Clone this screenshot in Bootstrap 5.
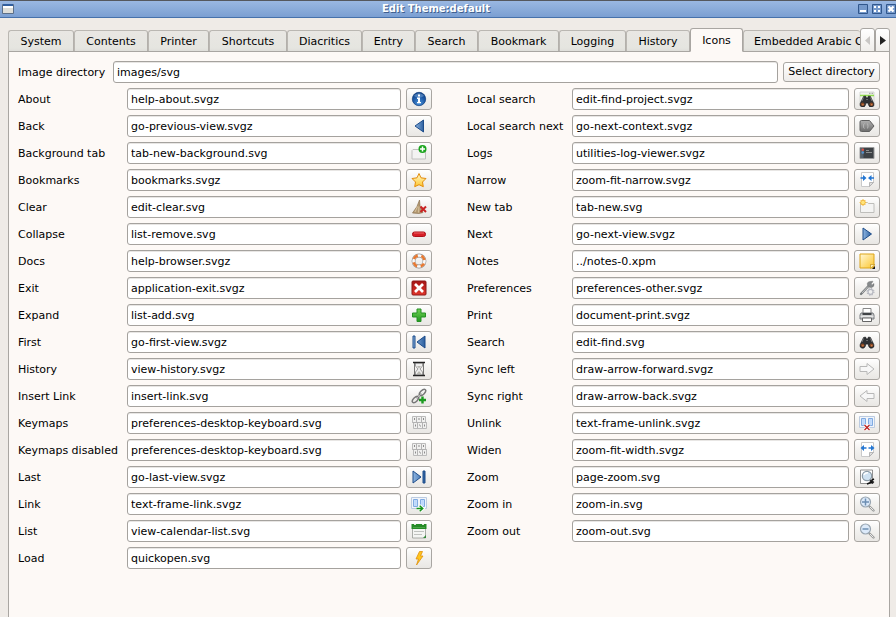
<!DOCTYPE html>
<html lang="en">
<head>
<meta charset="utf-8">
<meta name="viewport" content="width=device-width, initial-scale=1">
<title>Edit Theme:default</title>
<link href="https://cdn.jsdelivr.net/npm/bootstrap@5.3.0/dist/css/bootstrap.min.css" rel="stylesheet">
<style>
body{font:11px/16px "DejaVu Sans",sans-serif;color:#000;background:#efebe7}
.window{height:100vh}
.titlebar{height:18px;background:linear-gradient(#9ab8e2,#7b9fd2);border-top:1px solid #55585e;border-bottom:1px solid #4671ab;padding-left:2px}
.titlebar h1{font-size:10px;line-height:16px;color:#fff;text-shadow:1px 1px 0 #3f5f8e}
.winbtn{width:10px;height:10px;padding:0;border:0;background:none;display:flex}
.tabbar{margin:10px 6px 0 8px;height:24px;position:relative;z-index:1;padding-right:30px}
.tabbar::after{content:"";position:absolute;left:0;right:0;bottom:0;border-bottom:1px solid #a9a6a2}
.tabstrip{display:grid;grid-template-columns:66fr 74fr 61fr 78fr 75fr 53fr 63fr 81fr 67fr 64fr 53fr 117fr;height:24px;align-items:end;flex:1;min-width:0;border:0;overflow:hidden}
.tabstrip .nav-link{width:100%;height:22px;padding:2px 0 0;margin:0;border:1px solid #bab7b2;border-right-color:#b3b0ab;border-bottom:1px solid #a9a6a2;border-radius:3px 3px 0 0;background:linear-gradient(#e9e7e3,#e5e5e0 85%,#dfdeda);color:#000;white-space:nowrap;overflow:hidden;text-align:center}
.tabstrip .nav-link:hover{border-color:#bab7b2}
.tabstrip .nav-link.active{height:24px;background:#fdf9f6;border-color:#a9a6a2;border-bottom-color:#fdf9f6;position:relative;z-index:3;color:#000}
.tabstrip .nav-link.clipped{text-align:left;padding-left:10px;border-right:0}
.scrollers{position:absolute;right:0;top:0;z-index:2}
.scrollers button{width:15px;height:24px;padding:0;border:1px solid #a9a6a2;border-radius:3px 3px 0 0;background:linear-gradient(#fff,#f0eeeb);display:flex;align-items:center;justify-content:center}
.pane{flex:1;margin:0 6px 0 8px;padding:9px 9px 20px;border:1px solid #a9a6a2;border-width:0 1px;background:#fdf9f6}
.pane label{padding-top:2px}
.dirline label{width:90px}
.field{height:22px;padding:0 3px;font-size:11px;line-height:20px;color:#000;border:1px solid #a5a29e;border-radius:3px;background:#fff;box-shadow:inset 0 1px 0 #e8e6e4;min-width:0;flex:1}
.field:focus{box-shadow:inset 0 1px 0 #86abd9;border-color:#5b86be}
.tool{width:26px;height:22px;padding:0;border:1px solid #a9a6a2;border-radius:3px;background:linear-gradient(#fff,#f3f2f0 45%,#e9e7e4);display:flex;align-items:center;justify-content:center;flex:none}
.choose{height:20px;padding:0 3px;border:1px solid #a9a6a2;border-radius:3px;background:linear-gradient(#fff,#eeecea);font-size:11px;line-height:18px;color:#000;white-space:nowrap;min-width:97px}
.gap5{gap:5px}
.columns{display:grid;grid-template-columns:414fr 413fr;column-gap:35px;margin-top:5px}
.line{display:flex;align-items:center}
.line label{width:109px;white-space:nowrap;flex:none}
.second .line label{width:105px}
.line .tool{margin-left:5px}
</style>
<script src="https://cdn.jsdelivr.net/npm/bootstrap@5.3.0/dist/js/bootstrap.bundle.min.js"></script>
</head>
<body>
<svg width="0" height="0" class="position-absolute" aria-hidden="true">
<defs>
<linearGradient id="blue" x1="0" x2="1" y1="0" y2="0"><stop stop-color="#8fb6e2"/><stop offset="1" stop-color="#2b5f9f"/></linearGradient>
<radialGradient id="ball" cx=".5" cy=".8" r=".8"><stop stop-color="#4b93d8"/><stop offset=".6" stop-color="#1c58a5"/><stop offset="1" stop-color="#0c3c80"/></radialGradient>
<linearGradient id="gold" x2="0" y2="1"><stop stop-color="#fffbd0"/><stop offset="1" stop-color="#ffc62b"/></linearGradient>
<linearGradient id="note" x2="1" y2="1"><stop stop-color="#fff8d8"/><stop offset="1" stop-color="#fcc62c"/></linearGradient>
<linearGradient id="green" x2="0" y2="1"><stop stop-color="#72d055"/><stop offset="1" stop-color="#219a20"/></linearGradient>
<linearGradient id="red" x2="0" y2="1"><stop stop-color="#a51515"/><stop offset="1" stop-color="#e2372c"/></linearGradient>
<linearGradient id="gray" x2="0" y2="1"><stop stop-color="#b0b0b0"/><stop offset="1" stop-color="#6c6c6c"/></linearGradient>
<symbol id="binoc" viewBox="0 0 16 16"><path d="M4.500 3.500 6.500 3l1 2h1l1-2 2 .5 3.300 7a2.500 2.500 0 0 1-5 2L9 10H7l-.8 2.500a2.500 2.500 0 0 1-5-2z" fill="#2e3134" stroke="#17191b" stroke-width=".6"/><path d="M4.500 4.500 3 8m8.500-3.500L13 8M7.300 6.500h1.500" stroke="#8b8d8f" stroke-width=".8"/><circle cx="3.600" cy="11.300" r="1.800" fill="#8a4a25"/><circle cx="12.400" cy="11.300" r="1.800" fill="#8a4a25"/><circle cx="3.900" cy="11.700" r=".8" fill="#d48450"/><circle cx="12.700" cy="11.700" r=".8" fill="#d48450"/></symbol>
<symbol id="keys" viewBox="0 0 16 16"><path d="M1.500 1.500h13v6h-13zM2.500 7.500h13v6h-13z" fill="#f0f0ef" stroke="#bbb"/><path d="M5.500 2v5M10.500 2v5M6.500 8v5M11.500 8v5M1.500 7.500h14" stroke="#b3b3b3"/><path d="M3.500 3v2M8 3v2M12.500 3v2M4.500 9.500v2M8.500 9.500l1 2M13.500 9.500v2" fill="none" stroke="#8c8c8c"/></symbol>
<symbol id="frames" viewBox="0 0 16 16"><path d="M.5 1.500h15v11H.5z" fill="#f2f5fa" stroke="#bccbe0"/><path d="M2.500 3.500h4v7h-4zM9.500 3.500h4v7h-4z" fill="#cfe3ff" stroke="#80abe2"/><path d="M3.500 5h2m-2 2h2m-2 2h2m5-4h2m-2 2h2m-2 2h2" stroke="#9cc1f0" stroke-width=".7"/></symbol>
<symbol id="glass" viewBox="0 0 16 16"><path d="m10.500 10.500 4 4" stroke="#999a99" stroke-width="2.400" stroke-linecap="round"/><path d="m11 11 3.400 3.400" stroke="#f4f4f4" stroke-width=".9"/><circle cx="6.500" cy="6" r="5" fill="#dceafa" stroke="#98a5b1" stroke-width="1.200"/></symbol>
<symbol id="fit" viewBox="0 0 16 16"><path d="M2.500.5h12v10l-4 4h-8z" fill="#fff" stroke="#cacaca"/><path d="M14.500 10.500h-4v4z" fill="#dedede" stroke="#aaa" stroke-width=".8"/></symbol>
</defs>
</svg>

<div class="window d-flex flex-column">
<header class="titlebar d-flex align-items-center justify-content-between">
  <svg width="12" height="12" viewBox="0 0 12 12" aria-hidden="true"><path d="M.5 1.500h11v9H.5z" fill="#deded9" stroke="#5c6f88"/><path d="M1 1h10v2H1z" fill="#315f9f"/><path d="M1 3h10v2H1z" fill="#fff"/></svg>
  <h1 class="m-0 fw-bold flex-fill text-center">Edit Theme:default</h1>
  <div class="d-flex gap-1">
    <button class="winbtn" type="button" aria-label="Minimize"><svg width="10" height="10"><path d="M.5.5h9v9h-9z" fill="#7599cb" stroke="#31578c"/><path d="M2 6h6v2H2z" fill="#fff"/></svg></button>
    <button class="winbtn" type="button" aria-label="Maximize"><svg width="10" height="10"><path d="M.5.5h9v9h-9z" fill="#7599cb" stroke="#31578c"/><path d="M2 2h2v2H2zM6 2h2v2H6zM2 6h2v2H2zM6 6h2v2H6z" fill="#fff"/></svg></button>
    <button class="winbtn" type="button" aria-label="Close"><svg width="10" height="10"><path d="M.5.5h9v9h-9z" fill="#7599cb" stroke="#31578c"/><path d="m2.500 2.500 5 5m0-5-5 5" stroke="#fff" stroke-width="2.200"/></svg></button>
  </div>
</header>

<div class="tabbar d-flex">
  <div class="nav nav-tabs tabstrip" role="tablist">
    <button class="nav-link" role="tab" type="button">System</button>
    <button class="nav-link" role="tab" type="button">Contents</button>
    <button class="nav-link" role="tab" type="button">Printer</button>
    <button class="nav-link" role="tab" type="button">Shortcuts</button>
    <button class="nav-link" role="tab" type="button">Diacritics</button>
    <button class="nav-link" role="tab" type="button">Entry</button>
    <button class="nav-link" role="tab" type="button">Search</button>
    <button class="nav-link" role="tab" type="button">Bookmark</button>
    <button class="nav-link" role="tab" type="button">Logging</button>
    <button class="nav-link" role="tab" type="button">History</button>
    <button class="nav-link active" role="tab" type="button" aria-selected="true">Icons</button>
    <button class="nav-link clipped" role="tab" type="button">Embedded Arabic C</button>
  </div>
  <div class="scrollers d-flex">
    <button type="button" aria-label="Scroll tabs left"><svg width="5" height="9"><path d="M5 0v9L0 4.500z" fill="#c9c7c5"/></svg></button>
    <button type="button" aria-label="Scroll tabs right"><svg width="6" height="9"><path d="M0 0v9l6-4.500z" fill="#222"/></svg></button>
  </div>
</div>

<main class="pane" role="tabpanel">
<div class="d-flex align-items-center gap5 dirline">
  <label for="dir">Image directory</label>
  <input class="form-control field" id="dir" value="images/svg">
  <button class="btn choose" type="button">Select directory</button>
</div>

<div class="columns">
<div class="d-flex flex-column gap5">
  <div class="line"><label for="a1">About</label><input class="form-control field" id="a1" value="help-about.svgz"><button class="btn tool" type="button" aria-label="About icon"><svg width="16" height="16" viewBox="0 0 16 16"><circle cx="8" cy="8" r="6.700" fill="url(#ball)" stroke="#0c3b7d" stroke-width=".7"/><path d="M3 5a6 6 0 0 1 10 0 9 9 0 0 1-10 0z" fill="#8db9e5" opacity=".45"/><path d="M7 3.500h2v2H7zM6 6.500h3v4.500h1v1.300H6V11h1V8H6z" fill="#fff"/></svg></button></div>
  <div class="line"><label for="a2">Back</label><input class="form-control field" id="a2" value="go-previous-view.svgz"><button class="btn tool" type="button" aria-label="Back icon"><svg width="16" height="16" viewBox="0 0 16 16"><path d="M12.500 2v12L4 8z" fill="url(#blue)" stroke="#1d4c8a"/></svg></button></div>
  <div class="line"><label for="a3">Background tab</label><input class="form-control field" id="a3" value="tab-new-background.svg"><button class="btn tool" type="button" aria-label="Background tab icon"><svg width="16" height="16" viewBox="0 0 16 16"><path d="M1 14V5.500l1-1h12.500V14z" fill="#f3f3f2" stroke="#c0c0be"/><circle cx="11.500" cy="4" r="4" fill="#1ba51d"/><path d="M11.500 1.500v5M9 4h5" stroke="#fff" stroke-width="1.500"/></svg></button></div>
  <div class="line"><label for="a4">Bookmarks</label><input class="form-control field" id="a4" value="bookmarks.svgz"><button class="btn tool" type="button" aria-label="Bookmarks icon"><svg width="16" height="16" viewBox="0 0 16 16"><path d="m8 1.500 2 4.300 5 .7-3.500 3.500.8 4.700L8 12.700l-4.300 2 .8-4.700L1 6.500l5-.7z" fill="url(#gold)" stroke="#e38d0c" stroke-linejoin="round"/></svg></button></div>
  <div class="line"><label for="a5">Clear</label><input class="form-control field" id="a5" value="edit-clear.svg"><button class="btn tool" type="button" aria-label="Clear icon"><svg width="16" height="16" viewBox="0 0 16 16"><path d="M8.500 1 9 7l3 6.500-4 1-6.500-.5L6 7.500z" fill="#b49a72" stroke="#8d7351" stroke-width=".7"/><path d="M6.500 7.500 4 13M8 7.500 7.500 13.500" stroke="#d7c39e"/><path d="m9.500 7.500 5.500 5.500m0-5.500L9.500 13" stroke="#c92323" stroke-width="2"/></svg></button></div>
  <div class="line"><label for="a6">Collapse</label><input class="form-control field" id="a6" value="list-remove.svg"><button class="btn tool" type="button" aria-label="Collapse icon"><svg width="16" height="16" viewBox="0 0 16 16"><rect x="1.500" y="6" width="13" height="4.500" rx="2" fill="#d71f27" stroke="#ad1119"/><path d="M3 7h10" stroke="#f17a7a" stroke-width=".8"/></svg></button></div>
  <div class="line"><label for="a7">Docs</label><input class="form-control field" id="a7" value="help-browser.svgz"><button class="btn tool" type="button" aria-label="Docs icon"><svg width="16" height="16" viewBox="0 0 16 16"><circle cx="8" cy="8" r="5.500" fill="none" stroke="#909090" stroke-width="3.800"/><circle cx="8" cy="8" r="5.500" fill="none" stroke="#fafafa" stroke-width="2.600"/><circle cx="8" cy="8" r="5.500" fill="none" stroke="#e77932" stroke-width="2.600" stroke-dasharray="5.240 3.400" stroke-dashoffset="2.620" transform="rotate(45 8 8)"/></svg></button></div>
  <div class="line"><label for="a8">Exit</label><input class="form-control field" id="a8" value="application-exit.svgz"><button class="btn tool" type="button" aria-label="Exit icon"><svg width="16" height="16" viewBox="0 0 16 16"><rect x="1" y="1" width="14" height="14" rx="1" fill="url(#red)" stroke="#8c1616"/><path d="m4 4 8 8m0-8-8 8" stroke="#fff" stroke-width="2.700"/></svg></button></div>
  <div class="line"><label for="a9">Expand</label><input class="form-control field" id="a9" value="list-add.svg"><button class="btn tool" type="button" aria-label="Expand icon"><svg width="16" height="16" viewBox="0 0 16 16"><path d="M6 2h4v4h4.500v4H10v4.500H6V10H1.500V6H6z" fill="url(#green)" stroke="#259124" stroke-linejoin="round"/></svg></button></div>
  <div class="line"><label for="a10">First</label><input class="form-control field" id="a10" value="go-first-view.svgz"><button class="btn tool" type="button" aria-label="First icon"><svg width="16" height="16" viewBox="0 0 16 16"><path d="M2 2h2v12H2zM14 2v12L6 8z" fill="url(#blue)" stroke="#1d4c8a"/></svg></button></div>
  <div class="line"><label for="a11">History</label><input class="form-control field" id="a11" value="view-history.svgz"><button class="btn tool" type="button" aria-label="History icon"><svg width="16" height="16" viewBox="0 0 16 16"><path d="M4.500 2v3L7 8l-2.500 3v3h7v-3L9 8l2.500-3V2z" fill="#eee" stroke="#888" stroke-width=".8"/><path d="M3.500 2v12m9-12v12" stroke="#555" stroke-width=".8"/><path d="M2 1.500h12M2 14.500h12" stroke="#242424" stroke-width="1.700"/><path d="M6 5h4L8 7.500zM5.500 13 8 10l2.500 3z" fill="#b9b9b2"/></svg></button></div>
  <div class="line"><label for="a12">Insert Link</label><input class="form-control field" id="a12" value="insert-link.svg"><button class="btn tool" type="button" aria-label="Insert Link icon"><svg width="16" height="16" viewBox="0 0 16 16"><g fill="none" stroke="#777" stroke-width="1.500"><ellipse cx="11.500" cy="4.500" rx="4" ry="2" transform="rotate(-45 11.500 4.500)"/><ellipse cx="4.500" cy="11.500" rx="4" ry="2" transform="rotate(-45 4.500 11.500)"/><path d="m5.500 10.500 5-5"/></g><path d="m4 12 8-8" stroke="#ddd" stroke-width=".6"/><path d="M11.500 8.500v7M8 12h7" stroke="#1c9a20" stroke-width="2.400"/></svg></button></div>
  <div class="line"><label for="a13">Keymaps</label><input class="form-control field" id="a13" value="preferences-desktop-keyboard.svg"><button class="btn tool" type="button" aria-label="Keymaps icon"><svg width="16" height="16"><use href="#keys"/></svg></button></div>
  <div class="line"><label for="a14">Keymaps disabled</label><input class="form-control field" id="a14" value="preferences-desktop-keyboard.svg"><button class="btn tool" type="button" aria-label="Keymaps disabled icon"><svg width="16" height="16"><use href="#keys"/></svg></button></div>
  <div class="line"><label for="a15">Last</label><input class="form-control field" id="a15" value="go-last-view.svgz"><button class="btn tool" type="button" aria-label="Last icon"><svg width="16" height="16" viewBox="0 0 16 16"><path d="M2 2v12l8-6zM12 2h2v12h-2z" fill="url(#blue)" stroke="#1d4c8a"/></svg></button></div>
  <div class="line"><label for="a16">Link</label><input class="form-control field" id="a16" value="text-frame-link.svgz"><button class="btn tool" type="button" aria-label="Link icon"><svg width="16" height="16" viewBox="0 0 16 16"><use href="#frames"/><path d="M5.500 12.500h5M8.500 9.500l3.500 3-3.500 3" fill="none" stroke="#fff" stroke-width="3"/><path d="M5.500 12.500h6M8.700 9.800l3 2.700-3 2.700" fill="none" stroke="#16931b" stroke-width="1.500"/></svg></button></div>
  <div class="line"><label for="a17">List</label><input class="form-control field" id="a17" value="view-calendar-list.svg"><button class="btn tool" type="button" aria-label="List icon"><svg width="16" height="16" viewBox="0 0 16 16"><path d="M1.500 2h13v13h-13z" fill="#f4f5f3" stroke="#979b95" stroke-width=".8"/><path d="M.5 1h15v5H.5z" fill="#258c28"/><path d="M2 4.500h12" stroke="#4ba548"/><path d="M3 1.500h2M11 1.500h2" stroke="#d8e8d5"/><path d="M3 8.500h10M3 11.500h8" stroke="#c0c2bf"/><path d="M12 15h3v-3z" fill="#34883a"/></svg></button></div>
  <div class="line"><label for="a18">Load</label><input class="form-control field" id="a18" value="quickopen.svg"><button class="btn tool" type="button" aria-label="Load icon"><svg width="16" height="16" viewBox="0 0 16 16"><path d="M8.500 1.500h3L9.500 6H12l-6.500 9 2-6H5z" fill="#ffc51d" stroke="#df910d" stroke-width=".8"/></svg></button></div>
</div>

<div class="d-flex flex-column gap5 second">
  <div class="line"><label for="b1">Local search</label><input class="form-control field" id="b1" value="edit-find-project.svgz"><button class="btn tool" type="button" aria-label="Local search icon"><svg width="16" height="16" viewBox="0 0 16 16"><path d="M1 1h14v12H1z" fill="#f0f1ee" stroke="#c9cbc7" stroke-width=".7"/><path d="M1 4.500h14" stroke="#91dc4e" stroke-width="1.500"/><path d="M10 2.300h4" stroke="#999" stroke-dasharray="1 .5"/><use href="#binoc" y="2"/></svg></button></div>
  <div class="line"><label for="b2">Local search next</label><input class="form-control field" id="b2" value="go-next-context.svgz"><button class="btn tool" type="button" aria-label="Local search next icon"><svg width="16" height="16" viewBox="0 0 16 16"><path d="M2.500 2.500h8L15 8l-4.500 5.500h-8q-1.500 0-1.500-1.500V4q0-1.500 1.500-1.500z" fill="url(#gray)" stroke="#606060"/><path d="M5.500 5.500q-1 0-1 2.500t1 2.500M8 5.500q1 0 1 2.500t-1 2.500" fill="none" stroke="#bbb" stroke-width=".9"/></svg></button></div>
  <div class="line"><label for="b3">Logs</label><input class="form-control field" id="b3" value="utilities-log-viewer.svgz"><button class="btn tool" type="button" aria-label="Logs icon"><svg width="16" height="16" viewBox="0 0 16 16"><path d="M1 2.500h14v11H1z" fill="#3d4145" stroke="#9a9b9c"/><path d="M1.500 3h3v10h-3z" fill="#56616b"/><circle cx="3.800" cy="4.800" r="1.300" fill="#d75246"/><circle cx="3.800" cy="7.500" r="1.300" fill="#5892cc"/><path d="M7 5.500h3M7 7.500h6" stroke="#8b8d8e"/></svg></button></div>
  <div class="line"><label for="b4">Narrow</label><input class="form-control field" id="b4" value="zoom-fit-narrow.svgz"><button class="btn tool" type="button" aria-label="Narrow icon"><svg width="16" height="16" viewBox="0 0 16 16"><use href="#fit"/><path d="M1.500 6H5M15 6h-3.500" stroke="#2376d2" stroke-width="1.500"/><path d="m4 3 3.500 3L4 9zM12.500 3 9 6l3.500 3z" fill="#2376d2"/></svg></button></div>
  <div class="line"><label for="b5">New tab</label><input class="form-control field" id="b5" value="tab-new.svg"><button class="btn tool" type="button" aria-label="New tab icon"><svg width="16" height="16" viewBox="0 0 16 16"><path d="M1.500 13.500v-10h7l1 1h5.500v9z" fill="#f4f4f3" stroke="#bebebb"/><path d="M4 0v7M.5 3.500h7M1.500 1l5 5m0-5-5 5" stroke="#f7c85b"/><circle cx="4" cy="3.500" r="2.300" fill="#ffe57b" stroke="#eeab29" stroke-width=".8"/></svg></button></div>
  <div class="line"><label for="b6">Next</label><input class="form-control field" id="b6" value="go-next-view.svgz"><button class="btn tool" type="button" aria-label="Next icon"><svg width="16" height="16" viewBox="0 0 16 16"><path d="M4 2v12l8.500-6z" fill="url(#blue)" stroke="#1d4c8a"/></svg></button></div>
  <div class="line"><label for="b7">Notes</label><input class="form-control field" id="b7" value="../notes-0.xpm"><button class="btn tool" type="button" aria-label="Notes icon"><svg width="16" height="16" viewBox="0 0 16 16"><path d="M1 1h14v14H1z" fill="url(#note)" stroke="#dca51a"/><path d="M11.500 15.500v-4H16z" fill="#fff0b7" stroke="#c5951d" stroke-width=".7"/><path d="M13 16h3v-3z" fill="#171717"/></svg></button></div>
  <div class="line"><label for="b8">Preferences</label><input class="form-control field" id="b8" value="preferences-other.svgz"><button class="btn tool" type="button" aria-label="Preferences icon"><svg width="16" height="16" viewBox="0 0 16 16"><path d="m2 14 7.500-8" stroke="#777b7d" stroke-width="2.300" stroke-linecap="round"/><path d="M14 1.500 12 4l1 1 2-1.500q.5 3.500-2.500 4T8.500 5 11 1.500t3 0z" fill="#85898b" stroke="#666" stroke-width=".4"/><path d="m3 13 6-6.500" stroke="#d4d6d7" stroke-width=".8"/><circle cx="11.500" cy="11.800" r="2.500" fill="#eee" stroke="#b6b8c0" stroke-width="1.200"/><circle cx="11.500" cy="11.800" r="3.500" fill="none" stroke="#a9acb5" stroke-dasharray="1.300 1.450"/></svg></button></div>
  <div class="line"><label for="b9">Print</label><input class="form-control field" id="b9" value="document-print.svgz"><button class="btn tool" type="button" aria-label="Print icon"><svg width="16" height="16" viewBox="0 0 16 16"><path d="M4 1.500h8V7H4z" fill="#fff" stroke="#888"/><path d="M2 6h12l1 2v4H1V8z" fill="#c5c7c9" stroke="#777b7e"/><path d="M3.500 7h9" stroke="#404346" stroke-width="2"/><path d="M3.500 11h9v3.500h-9z" fill="#fff" stroke="#666"/><path d="M1.500 9.300h13" stroke="#eee"/></svg></button></div>
  <div class="line"><label for="b10">Search</label><input class="form-control field" id="b10" value="edit-find.svg"><button class="btn tool" type="button" aria-label="Search icon"><svg width="16" height="16"><use href="#binoc"/></svg></button></div>
  <div class="line"><label for="b11">Sync left</label><input class="form-control field" id="b11" value="draw-arrow-forward.svgz"><button class="btn tool" type="button" aria-label="Sync left icon"><svg width="16" height="16" viewBox="0 0 16 16"><path d="M1 5.500h7v-3L15 8l-7 5.500v-3H1z" fill="#f7f7f7" stroke="#b8b8b8"/></svg></button></div>
  <div class="line"><label for="b12">Sync right</label><input class="form-control field" id="b12" value="draw-arrow-back.svgz"><button class="btn tool" type="button" aria-label="Sync right icon"><svg width="16" height="16" viewBox="0 0 16 16"><path d="M15 5.500H8v-3L1 8l7 5.500v-3h7z" fill="#f7f7f7" stroke="#b8b8b8"/></svg></button></div>
  <div class="line"><label for="b13">Unlink</label><input class="form-control field" id="b13" value="text-frame-unlink.svgz"><button class="btn tool" type="button" aria-label="Unlink icon"><svg width="16" height="16" viewBox="0 0 16 16"><use href="#frames"/><path d="m5.500 10 5 5m0-5-5 5" stroke="#fff" stroke-width="3"/><path d="m5.500 10 5 5m0-5-5 5" stroke="#bd2525" stroke-width="1.400"/></svg></button></div>
  <div class="line"><label for="b14">Widen</label><input class="form-control field" id="b14" value="zoom-fit-width.svgz"><button class="btn tool" type="button" aria-label="Widen icon"><svg width="16" height="16" viewBox="0 0 16 16"><use href="#fit"/><path d="M4 6h3.500M9.500 6h3" stroke="#2376d2" stroke-width="1.500"/><path d="M5 3 1.500 6 5 9zM12 3l3.500 3L12 9z" fill="#2376d2"/></svg></button></div>
  <div class="line"><label for="b15">Zoom</label><input class="form-control field" id="b15" value="page-zoom.svg"><button class="btn tool" type="button" aria-label="Zoom icon"><svg width="16" height="16" viewBox="0 0 16 16"><path d="M1.500 1h12v13.500h-12z" fill="#fff" stroke="#777" stroke-width=".8"/><path d="m11 11 3.500 3" stroke="#222" stroke-width="2.500"/><circle cx="8" cy="7" r="4.700" fill="#cfe2f2" stroke="#8b9aa5" stroke-width="1.200"/><path d="M5 6q1-2.500 4-2.300" fill="none" stroke="#fff" stroke-width="1.400"/><path d="m8 15 5-2M13 11l2-1" stroke="#111" stroke-width="1.500"/></svg></button></div>
  <div class="line"><label for="b16">Zoom in</label><input class="form-control field" id="b16" value="zoom-in.svg"><button class="btn tool" type="button" aria-label="Zoom in icon"><svg width="16" height="16" viewBox="0 0 16 16"><use href="#glass"/><path d="M3 6h7M6.500 2.500v7" stroke="#6d8fb3" stroke-width="1.500"/></svg></button></div>
  <div class="line"><label for="b17">Zoom out</label><input class="form-control field" id="b17" value="zoom-out.svg"><button class="btn tool" type="button" aria-label="Zoom out icon"><svg width="16" height="16" viewBox="0 0 16 16"><use href="#glass"/><path d="M3.500 6h6" stroke="#6d8fb3" stroke-width="1.500"/></svg></button></div>
</div>
</div>
</main>
</div>
</body>
</html>
